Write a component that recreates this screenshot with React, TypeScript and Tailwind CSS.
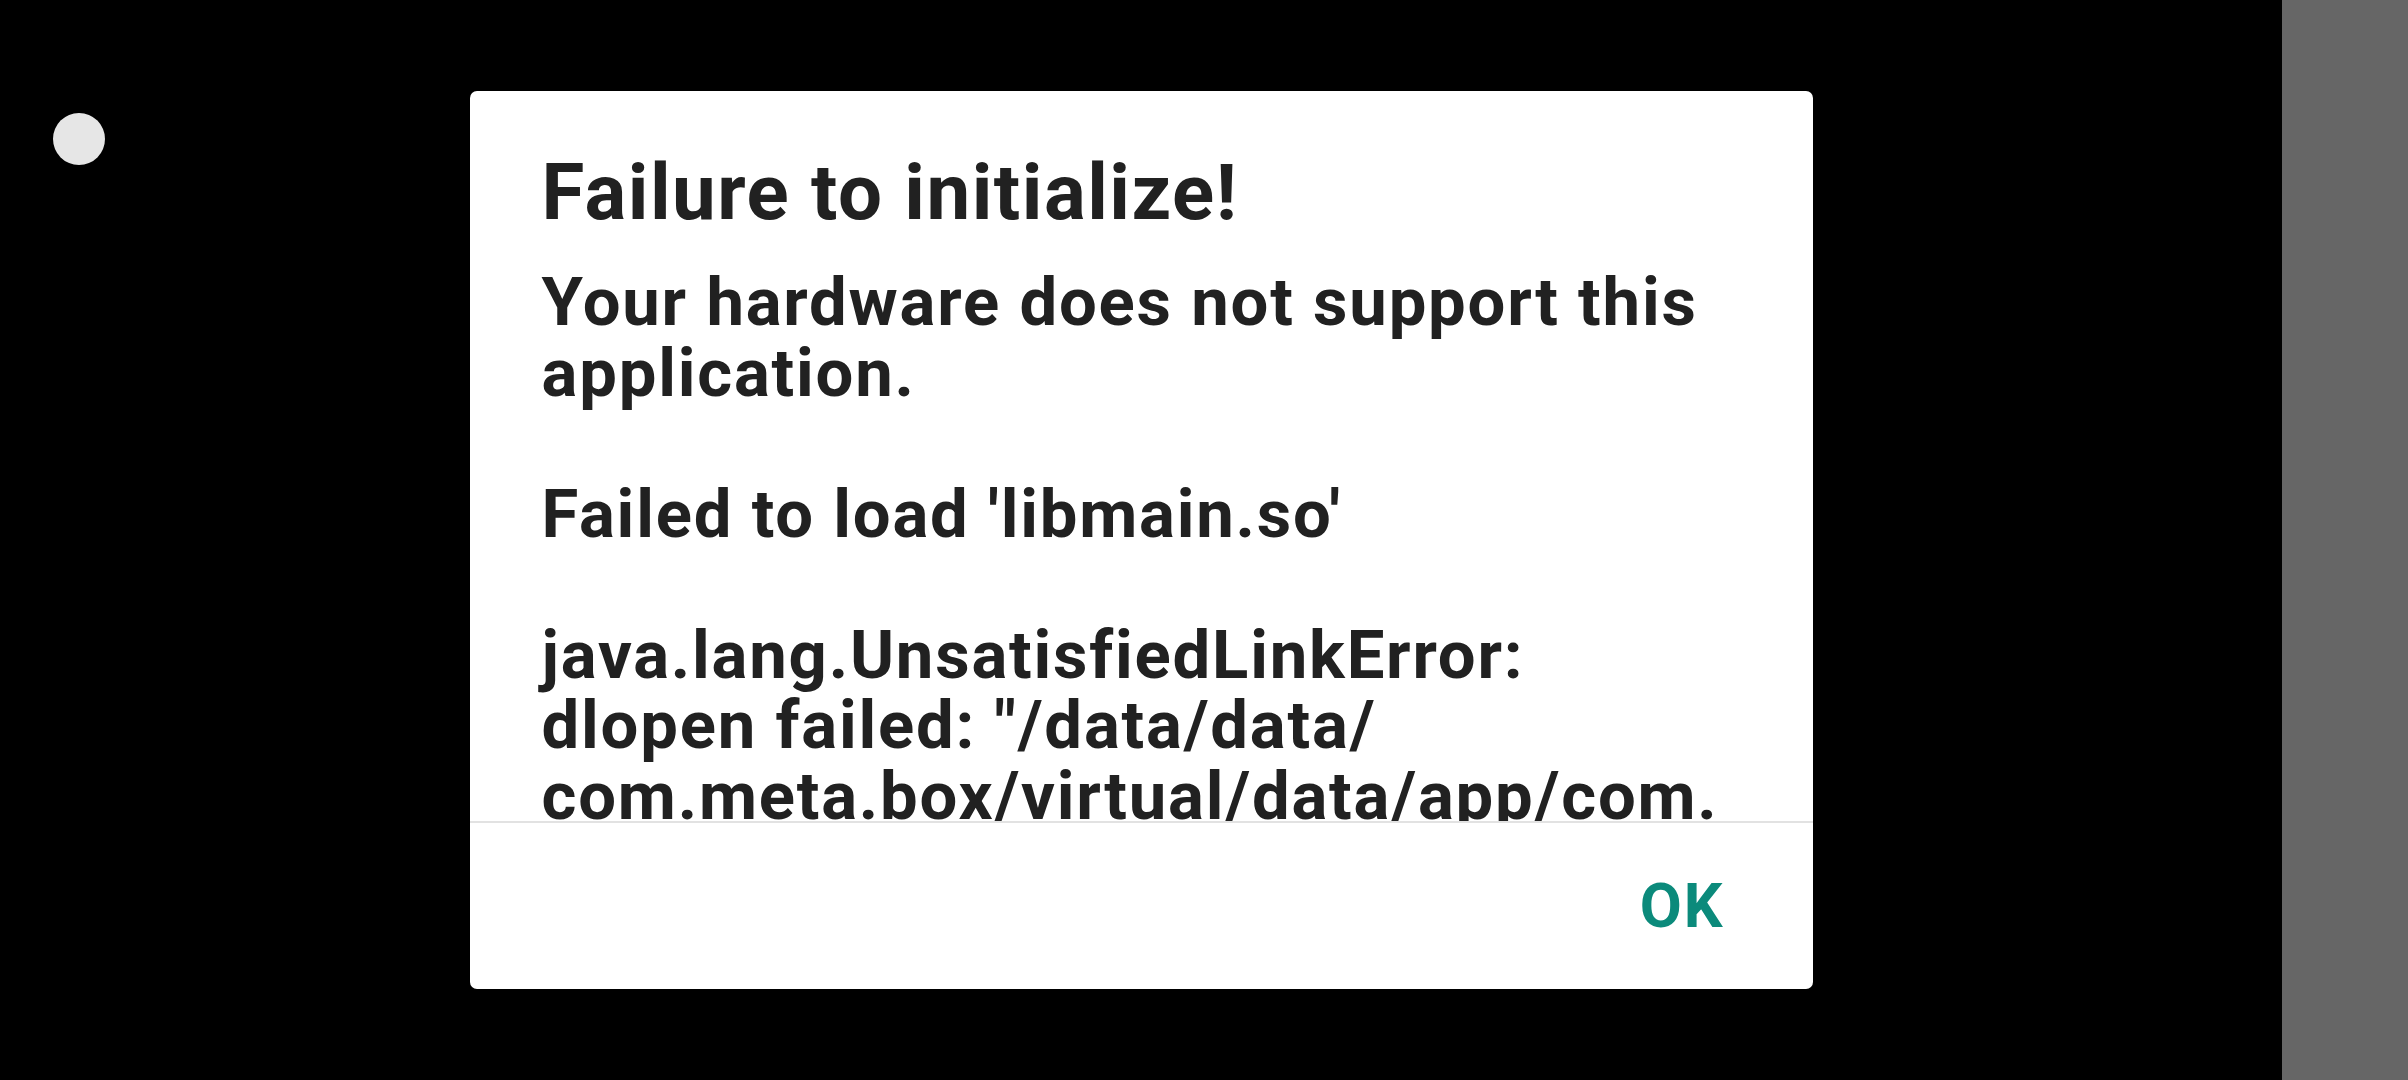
import React from 'react'

const lines = [
  'Your hardware does not support this',
  'application.',
  '',
  "Failed to load 'libmain.so'",
  '',
  'java.lang.UnsatisfiedLinkError:',
  'dlopen failed: "/data/data/',
  'com.meta.box/virtual/data/app/com.',
]

export default function App() {
  return (
    <div className="w-[2408px] h-[1080px] bg-black flex overflow-hidden" style={{ fontFamily: 'Roboto, "Noto Sans", sans-serif' }}>
      <div className="relative flex-1 flex items-center justify-center">
        {/* floating dot */}
        <div className="absolute left-[53px] top-[113px] w-[52px] h-[52px] rounded-full bg-[#e6e6e6]" />

        <div className="w-[1343px] h-[898px] bg-white rounded-[7px] flex flex-col">
          <div className="flex-1 overflow-hidden pl-[72px] pr-[60px] pt-[57px] text-[#212121] font-bold">
            <h1 className="text-[78px] leading-[89px] tracking-[1.5px]">Failure to initialize!</h1>
            <div className="mt-[30px] text-[67px] leading-[70.5px] tracking-[1.8px]">
              {lines.map((l, i) => (
                <div key={i} className="whitespace-nowrap h-[70.5px]">{l}</div>
              ))}
            </div>
          </div>
          <div className="h-[2px] bg-[#e2e2e2]" />
          <div className="h-[166px] flex items-center justify-end pr-[88px]">
            <button className="text-[61px] font-bold tracking-[2px] text-[#0b8a7b] leading-none">OK</button>
          </div>
        </div>
      </div>
      <div className="w-[126px] h-full bg-[#666666]" />
    </div>
  )
}
